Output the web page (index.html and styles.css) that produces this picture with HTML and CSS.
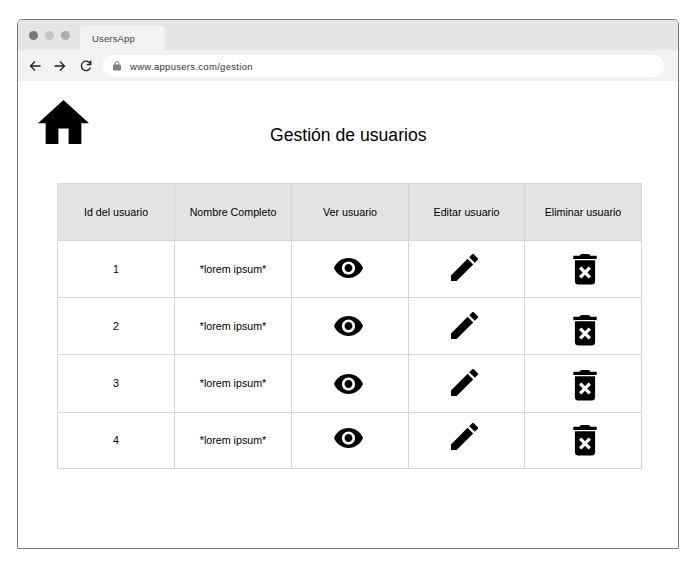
FILE: index.html
```html
<!DOCTYPE html>
<html lang="es">
<head>
<meta charset="utf-8">
<title>UsersApp</title>
<link rel="stylesheet" href="styles.css">
</head>
<body>
<svg class="defs" aria-hidden="true">
  <symbol id="eye" viewBox="1 4.5 22 15"><path d="M12 4.5C7 4.5 2.73 7.61 1 12c1.73 4.39 6 7.5 11 7.5s9.27-3.11 11-7.5c-1.73-4.39-6-7.5-11-7.5zM12 17c-2.76 0-5-2.24-5-5s2.24-5 5-5 5 2.24 5 5-2.24 5-5 5zm0-8c-1.66 0-3 1.34-3 3s1.34 3 3 3 3-1.34 3-3-1.34-3-3-3z"/></symbol>
  <symbol id="pencil" viewBox="3 3 18 18"><path d="M3 17.25V21h3.75L17.81 9.94l-3.75-3.75L3 17.25zM20.71 7.04a1 1 0 0 0 0-1.41l-2.34-2.34a1 1 0 0 0-1.41 0l-1.83 1.83 3.75 3.75 1.83-1.83z"/></symbol>
  <symbol id="trash" viewBox="0 0 24 31"><path d="M.3 1.700h6.200q.7-1.700 2.300-1.700h6.400q1.600 0 2.300 1.700H23.700v3.400H.3zM1.900 6.300h20.200v20.700q0 3.500-3.500 3.500H5.400q-3.500 0-3.500-3.500z"/><path class="cross" d="M7.200 13.600 16.800 23.400M16.800 13.600 7.200 23.400"/></symbol>
</svg>
<main class="window">
  <header class="tabs">
    <i class="dot dark"></i><i class="dot light"></i><i class="dot"></i>
    <div class="tab">UsersApp</div>
  </header>
  <nav class="toolbar">
    <svg class="nav" viewBox="0 0 12 12"><path d="M11.500 6H1.500M6 1.500 1.500 6l4.500 4.500"/></svg>
    <svg class="nav" viewBox="0 0 12 12"><path d="M.5 6h10M6 1.500l4.500 4.500L6 10.500"/></svg>
    <svg class="nav reload" viewBox="0 0 12 12"><path d="M10.200 3.500A4.700 4.700 0 1 0 10.500 7.500M10.800.5v4H6.800"/></svg>
    <div class="address">
      <svg class="lock" viewBox="0 0 8 10"><path class="body" d="M1 3.500h6q1 0 1 1V8.500q0 1-1 1H1q-1 0-1-1V4.500q0-1 1-1z"/><path class="shackle" d="M2 4V2.500a2 2 0 0 1 4 0V4"/></svg>
      <span>www.appusers.com/gestion</span>
    </div>
  </nav>
  <section class="page">
    <div class="heading">
      <svg class="home" viewBox="2 3 20 17" preserveAspectRatio="none"><path d="M10 20v-6h4v6h5v-8h3L12 3 2 12h3v8z"/></svg>
      <h1>Gestión de usuarios</h1>
    </div>
    <table>
      <colgroup><col class="wide"><col class="wide"><col class="wide"><col class="narrow"><col class="wide"></colgroup>
      <tr><th>Id del usuario</th><th>Nombre Completo</th><th>Ver usuario</th><th>Editar usuario</th><th>Eliminar usuario</th></tr>
      <tr class="r1"><td>1</td><td>*lorem ipsum*</td><td><svg class="eye"><use href="#eye"/></svg></td><td><svg class="pencil"><use href="#pencil"/></svg></td><td><svg class="trash"><use href="#trash"/></svg></td></tr>
      <tr class="r2"><td>2</td><td>*lorem ipsum*</td><td><svg class="eye"><use href="#eye"/></svg></td><td><svg class="pencil"><use href="#pencil"/></svg></td><td><svg class="trash"><use href="#trash"/></svg></td></tr>
      <tr class="r3"><td>3</td><td>*lorem ipsum*</td><td><svg class="eye"><use href="#eye"/></svg></td><td><svg class="pencil"><use href="#pencil"/></svg></td><td><svg class="trash"><use href="#trash"/></svg></td></tr>
      <tr class="r4"><td>4</td><td>*lorem ipsum*</td><td><svg class="eye"><use href="#eye"/></svg></td><td><svg class="pencil"><use href="#pencil"/></svg></td><td><svg class="trash"><use href="#trash"/></svg></td></tr>
    </table>
  </section>
</main>
</body>
</html>
```

FILE: styles.css
```css
* { box-sizing: border-box; }
body { margin: 0; background: #fff; color: #000; font-family: "Liberation Sans", Arial, sans-serif; }
svg { display: block; flex: none; }
.defs { width: 0; height: 0; overflow: hidden; }
.window { width: 662px; height: 530px; margin: 19px 0 0 17px; border: 1px solid #777; border-radius: 5px 5px 1px 1px; overflow: hidden; }
.tabs { display: flex; height: 30px; background: #e5e5e5; padding: 6px 0 0 11px; }
.dot { width: 9px; height: 9px; margin: 5px 7px 0 0; border-radius: 50%; background: #adadad; }
.dark { background: #777; }
.light { background: #c4c4c4; }
.tab { width: 85px; margin-left: 3px; padding-left: 12px; border-radius: 4px 4px 0 0; background: #f2f2f2; color: #444; font-size: 9.5px; line-height: 25px; letter-spacing: .15px; }
.toolbar { display: flex; align-items: center; height: 31px; padding-left: 11px; background: #f2f2f2; }
.nav { width: 12px; height: 12px; margin-right: 13px; fill: none; stroke: #222; stroke-width: 1.3; }
.nav.reload { margin: 0 11px 0 1px; }
.address { display: flex; align-items: center; width: 561px; height: 22px; padding-left: 10px; border-radius: 11px; background: #fff; color: #333; font-size: 9.5px; letter-spacing: .3px; }
.address span { padding-top: 2px; }
.lock { width: 8px; height: 10px; margin-right: 9px; }
.lock .body { fill: #808080; }
.lock .shackle { fill: none; stroke: #808080; }
.page { padding: 19px 0 0 20px; }
.heading { display: flex; height: 83px; }
.home { width: 51px; height: 44px; }
h1 { margin: 24px 0 0 181px; font-size: 17.6px; line-height: 22px; font-weight: 400; white-space: nowrap; }
table { width: 585px; margin-left: 19px; table-layout: fixed; border-collapse: collapse; font-size: 10.7px; text-align: center; }
.wide { width: 117px; }
.narrow { width: 116px; }
th, td { height: 57px; padding: 0; border: 1px solid #d6d6d6; font-weight: 400; }
th { background: #e4e4e4; }
.r3 td { height: 58px; padding-bottom: 2px; }
.r4 td { height: 56px; padding-bottom: 2px; }
td svg { position: relative; margin: 0 auto; }
.eye { width: 29px; height: 20px; left: -2px; top: -1px; }
.pencil { width: 27px; height: 27px; left: -2px; top: -2px; }
.trash { width: 24px; height: 31px; left: 2px; }
.cross { fill: none; stroke: #fff; stroke-width: 3.4; }
.r2 .eye { top: 0; }
.r2 .pencil { top: -1px; }
.r2 .trash { top: 4px; }
.r3 .eye { top: 1px; }
.r3 .pencil { top: 0; }
.r3 .trash { top: 3px; }
.r4 .eye { top: -2px; }
.r4 .pencil { top: -3px; }
.r4 .trash { top: 1px; }
```
